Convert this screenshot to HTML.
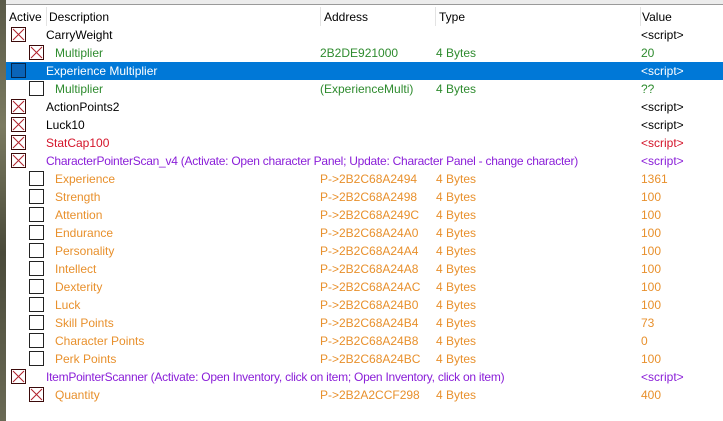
<!DOCTYPE html>
<html><head><meta charset="utf-8"><style>
body{margin:0;width:723px;height:421px;overflow:hidden;background:#fff;font-family:"Liberation Sans",sans-serif;font-size:12px;position:relative}
.top{position:absolute;left:0;top:0;width:723px;height:4px;background:#ececec;border-bottom:1px solid #9a9a9a}
.side{position:absolute;left:0;top:0;width:6px;height:421px;background:linear-gradient(#5a5a48,#7a7a60 30%,#4a4a3a 60%,#6a6a55)}
.hdr{position:absolute;top:8px;height:18px;line-height:18px;color:#000}
.sep{position:absolute;top:7px;width:1px;height:19px;background:#e3e3e3}
.r{position:absolute;left:6px;width:717px;height:18px;line-height:18px}
.r span{position:absolute;top:0;white-space:nowrap}
.cb{position:absolute;top:1px;width:15px;height:15px}
.sel{background:#0078d7}
.long{letter-spacing:-0.25px}
</style></head><body>
<div class="top"></div>
<div class="side"></div>
<div class="hdr" style="left:9px">Active</div>
<div class="sep" style="left:46px"></div>
<div class="hdr" style="left:49px">Description</div>
<div class="sep" style="left:320px"></div>
<div class="hdr" style="left:324px">Address</div>
<div class="sep" style="left:435px"></div>
<div class="hdr" style="left:439px">Type</div>
<div class="sep" style="left:640px"></div>
<div class="hdr" style="left:642px">Value</div>

<svg width="0" height="0" style="position:absolute"><defs>
<symbol id="x" viewBox="0 0 15 15"><rect x="0.5" y="0.5" width="14" height="14" fill="#fff" stroke="#3a0a0a"/><path d="M2 2L13 13M13 2L2 13" stroke="#b0202a" stroke-width="1"/></symbol>
<symbol id="o" viewBox="0 0 15 15"><rect x="0.5" y="0.5" width="14" height="14" fill="#fff" stroke="#222"/></symbol>
<symbol id="b" viewBox="0 0 15 15"><rect x="0.5" y="0.5" width="14" height="14" fill="#0a64b8" stroke="#06264a"/></symbol>
</defs></svg>

<div class="r" style="top:26px"><svg class="cb" style="left:5px"><use href="#x"/></svg><span style="left:40px">CarryWeight</span><span style="left:635px">&lt;script&gt;</span></div>
<div class="r" style="top:44px;color:#2e8b2e"><svg class="cb" style="left:23px"><use href="#x"/></svg><span style="left:49px">Multiplier</span><span style="left:314px">2B2DE921000</span><span style="left:430px">4 Bytes</span><span style="left:635px">20</span></div>
<div class="r sel" style="top:62px;color:#fff"><svg class="cb" style="left:5px"><use href="#b"/></svg><span style="left:40px">Experience Multiplier</span><span style="left:635px">&lt;script&gt;</span></div>
<div class="r" style="top:80px;color:#2e8b2e"><svg class="cb" style="left:23px"><use href="#o"/></svg><span style="left:49px">Multiplier</span><span style="left:314px">(ExperienceMulti)</span><span style="left:430px">4 Bytes</span><span style="left:635px">??</span></div>
<div class="r" style="top:98px"><svg class="cb" style="left:5px"><use href="#x"/></svg><span style="left:40px">ActionPoints2</span><span style="left:635px">&lt;script&gt;</span></div>
<div class="r" style="top:116px"><svg class="cb" style="left:5px"><use href="#x"/></svg><span style="left:40px">Luck10</span><span style="left:635px">&lt;script&gt;</span></div>
<div class="r" style="top:134px;color:#d4142a"><svg class="cb" style="left:5px"><use href="#x"/></svg><span style="left:40px">StatCap100</span><span style="left:635px">&lt;script&gt;</span></div>
<div class="r" style="top:152px;color:#8a1ed8"><svg class="cb" style="left:5px"><use href="#x"/></svg><span class="long" style="left:40px">CharacterPointerScan_v4 (Activate: Open character Panel; Update: Character Panel - change character)</span><span style="left:635px">&lt;script&gt;</span></div>

<div class="r" style="top:170px;color:#e8902c"><svg class="cb" style="left:23px"><use href="#o"/></svg><span style="left:49px">Experience</span><span style="left:314px">P-&gt;2B2C68A2494</span><span style="left:430px">4 Bytes</span><span style="left:635px">1361</span></div>
<div class="r" style="top:188px;color:#e8902c"><svg class="cb" style="left:23px"><use href="#o"/></svg><span style="left:49px">Strength</span><span style="left:314px">P-&gt;2B2C68A2498</span><span style="left:430px">4 Bytes</span><span style="left:635px">100</span></div>
<div class="r" style="top:206px;color:#e8902c"><svg class="cb" style="left:23px"><use href="#o"/></svg><span style="left:49px">Attention</span><span style="left:314px">P-&gt;2B2C68A249C</span><span style="left:430px">4 Bytes</span><span style="left:635px">100</span></div>
<div class="r" style="top:224px;color:#e8902c"><svg class="cb" style="left:23px"><use href="#o"/></svg><span style="left:49px">Endurance</span><span style="left:314px">P-&gt;2B2C68A24A0</span><span style="left:430px">4 Bytes</span><span style="left:635px">100</span></div>
<div class="r" style="top:242px;color:#e8902c"><svg class="cb" style="left:23px"><use href="#o"/></svg><span style="left:49px">Personality</span><span style="left:314px">P-&gt;2B2C68A24A4</span><span style="left:430px">4 Bytes</span><span style="left:635px">100</span></div>
<div class="r" style="top:260px;color:#e8902c"><svg class="cb" style="left:23px"><use href="#o"/></svg><span style="left:49px">Intellect</span><span style="left:314px">P-&gt;2B2C68A24A8</span><span style="left:430px">4 Bytes</span><span style="left:635px">100</span></div>
<div class="r" style="top:278px;color:#e8902c"><svg class="cb" style="left:23px"><use href="#o"/></svg><span style="left:49px">Dexterity</span><span style="left:314px">P-&gt;2B2C68A24AC</span><span style="left:430px">4 Bytes</span><span style="left:635px">100</span></div>
<div class="r" style="top:296px;color:#e8902c"><svg class="cb" style="left:23px"><use href="#o"/></svg><span style="left:49px">Luck</span><span style="left:314px">P-&gt;2B2C68A24B0</span><span style="left:430px">4 Bytes</span><span style="left:635px">100</span></div>
<div class="r" style="top:314px;color:#e8902c"><svg class="cb" style="left:23px"><use href="#o"/></svg><span style="left:49px">Skill Points</span><span style="left:314px">P-&gt;2B2C68A24B4</span><span style="left:430px">4 Bytes</span><span style="left:635px">73</span></div>
<div class="r" style="top:332px;color:#e8902c"><svg class="cb" style="left:23px"><use href="#o"/></svg><span style="left:49px">Character Points</span><span style="left:314px">P-&gt;2B2C68A24B8</span><span style="left:430px">4 Bytes</span><span style="left:635px">0</span></div>
<div class="r" style="top:350px;color:#e8902c"><svg class="cb" style="left:23px"><use href="#o"/></svg><span style="left:49px">Perk Points</span><span style="left:314px">P-&gt;2B2C68A24BC</span><span style="left:430px">4 Bytes</span><span style="left:635px">100</span></div>
<div class="r" style="top:368px;color:#8a1ed8"><svg class="cb" style="left:5px"><use href="#x"/></svg><span class="long" style="left:40px">ItemPointerScanner (Activate: Open Inventory, click on item; Open Inventory, click on item)</span><span style="left:635px">&lt;script&gt;</span></div>
<div class="r" style="top:386px;color:#e8902c"><svg class="cb" style="left:23px"><use href="#x"/></svg><span style="left:49px">Quantity</span><span style="left:314px">P-&gt;2B2A2CCF298</span><span style="left:430px">4 Bytes</span><span style="left:635px">400</span></div>
</body></html>
